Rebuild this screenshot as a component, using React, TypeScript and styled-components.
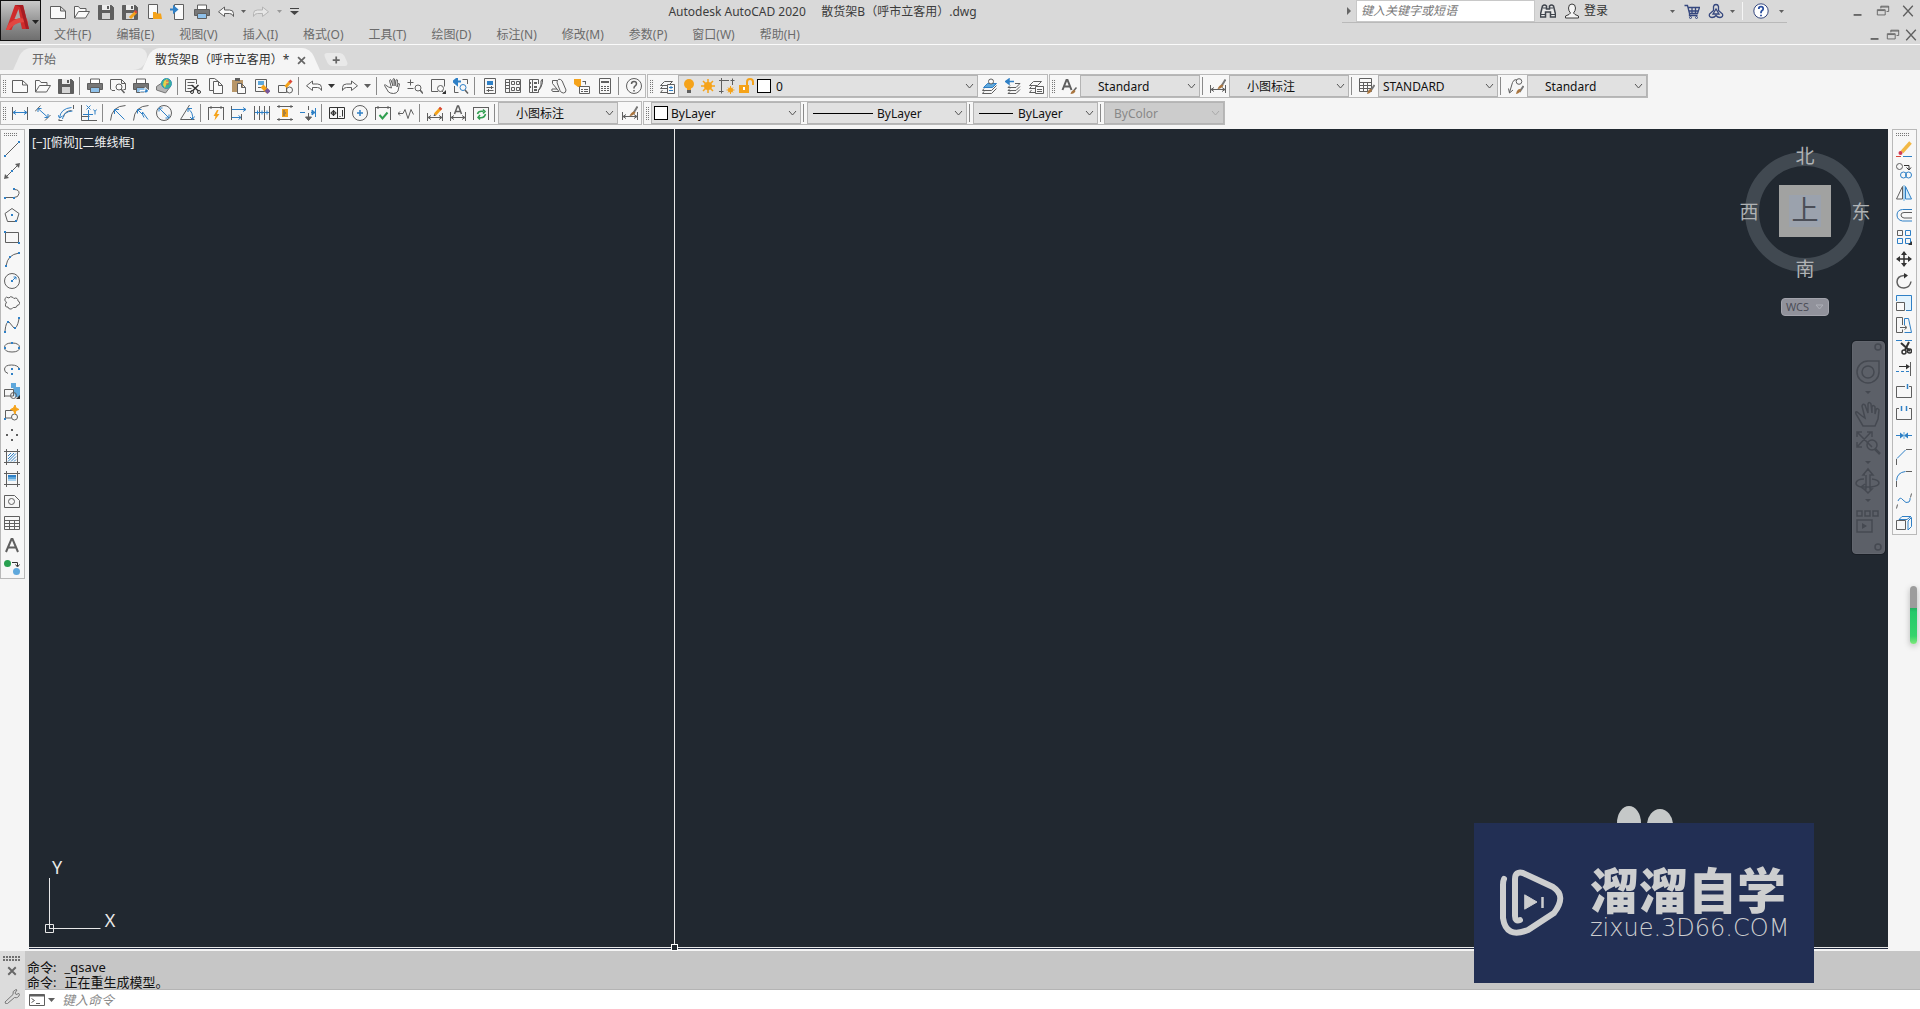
import React from "react";
import styled, { createGlobalStyle, css } from "styled-components";

const G = "#5f5f5f";
const B = "#2f80c6";
const O = "#f5a31a";
const L = "#5fa8dc";
const K = "#333333";
const N = "none";

type Shape = [d: string, stroke?: string, fill?: string, width?: number];

const circle = (x: number, y: number, r: number) =>
  `M${x - r} ${y}a${r} ${r} 0 1 0 ${2 * r} 0a${r} ${r} 0 1 0 ${-2 * r} 0z`;
const rect = (x: number, y: number, w: number, h: number) => `M${x} ${y}h${w}v${h}h${-w}z`;
const dots = (...p: [number, number][]): Shape => [
  p.map(([x, y]) => rect(x, y, 2, 2)).join(""),
  N,
  B,
];

const posts = "M.5 2v13M15.5 2v13";
const printer: Shape[] = [
  [rect(3.5, 1, 9, 4.5), G, "#fff"],
  ["M.5 5.5h15v6h-15z", G, "#777"],
  [rect(3.5, 9.5, 9, 5), G, "#8fc1ea"],
];
const disk: Shape[] = [
  ["M.5 1.5h13l2 2v12h-15z", G, "#5f5f5f"],
  [rect(4, 1, 8, 5), N, "#eee"],
  [rect(4, 9, 8, 6), N, "#d5d5d5"],
  [rect(9, 2, 2, 3), N, G],
];
const pencil: Shape[] = [
  ["M8 9.5L14 3", O, N, 3],
  ["M12.6 4.5L14.2 2.8", "#d9483b", N, 3],
  ["M6.5 11l1-2 1.5 1.4z", N, K],
];
const brush: Shape[] = [
  ["M15.5 1.5L11.5 8", "#777", N, 2],
  ["M12 6.5q-3 .5-4.5 4.5q4-.3 6-3.500z", N, "#a9753f"],
];
const stack: Shape[] = [
  ["M5.5 3.500h8l-4 4h-8zM3.500 8.500l-2 2h7M3.500 12l-2 2.500h7", G],
];
const undo: Shape[] = [["M6.500 3v3h5q4 0 4 3.500v3q-1-3-4-3h-5v3l-6-4.700z", G, "#fafafa"]];
const redo: Shape[] = [["M9.500 3v3h-5q-4 0-4 3.500v3q1-3 4-3h5v3l6-4.700z", G, "#fafafa"]];
const page: Shape[] = [["M.5 2.500h10l5 4.500v7.500h-15zM10.500 2.500v4.500h5", G, "#fafafa"]];
const folder: Shape[] = [
  ["M.5 14V2.500h4l1.500 2h6v3M.5 14l4-6.500h11l-4 6.500z", G, "#fafafa"],
];

const icons: Record<string, Shape[]> = {
  page,
  folder,
  disk,
  diskPen: [...disk, ["M8 14l6-6", O, N, 3], ["M13 8.500l1.500-1.500", "#d9483b", N, 3]],
  fromMobile: [
    ["M2.500.5h9v14h-9z", G, "#fafafa"],
    ["M7 15V8h3l1 1.500h4l1 5.500z", N, O],
  ],
  toMobile: [
    ["M4.500.5h9v15h-9z", G, "#fafafa"],
    ["M0 5.500h6M4 3l3 2.500-3 2.500z", B, B, 2],
  ],
  printer,
  undo,
  redo,
  redoDim: [["M9.500 3v3h-5q-4 0-4 3.500v3q1-3 4-3h5v3l6-4.700z", "#b4b4b4", "#e6e6e6"]],
  preview: [
    ["M5 12.500H2L.5 11V1.500h11l4 4v6h-2M11.500 1.500v4h4", G],
    [circle(9, 9, 3), G, "#fafafa"],
    ["M11 11l3.500 4", G, N, 1.500],
  ],
  plot: [...printer, ["M7 12.500h5v-3l4 3.500-4 3v-2H7z", "#fff", B]],
  globe: [
    ["M.5 8.500l6-4 8 4-5 6.500-9-3z", "#777", "#b5b5b5"],
    [circle(10.500, 5.500, 5), "#3390b5", "#36b59b"],
    ["M8 3l3-2 2 3-3 3-1 3-2-3z", N, "#e8cf4a"],
    ["M10 3h3M10 6h3", "#d3515a"],
  ],
  cut: [
    ["M7 13.500H.5v-12h11V6M2.500 4.500h7M2.500 7.500h6M2.500 10.500h4", G],
    ["M6.500 7l7 6M13.500 7l-6 6", K, N, 1.500],
    [circle(7, 14, 1.500) + circle(14, 14, 1.500), K],
  ],
  copyClip: [
    ["M5.500 12.500h-4v-12h5l4 3", G],
    ["M5.500 3.500h5l4 4v8h-9zM10.500 3.500v4h4", G, "#fafafa"],
  ],
  paste: [
    ["M1 2h11v12H1z", N, "#b89668"],
    [rect(4, 0, 5, 3), N, G],
    ["M6.500 5.500h4l4 4v6h-8zM10.500 5.500v4h4", G, "#fafafa"],
  ],
  matchProp: [
    ["M1.500 1.500h11v12h-11zM4 9.500h5", G],
    [rect(4, 3, 6, 4), N, L],
    ["M8 8l6 6", O, N, 4],
    ["M12 11.500l3 3", "#76569b", N, 4],
  ],
  blockEdit: [
    ["M1.500 14.500v-7h8v7zM8 2", G],
    [circle(12.500, 12, 3), G],
    ["M8.500 9L13 4", O, N, 3],
    ["M12.500 4.500L14.500 2.500", "#d9483b", N, 3],
  ],
  hand: [
    [
      "M4.500 9L1.500 7q-1-1-1 .5l4 6.500q2 1.500 5 1.500t4.500-2.500l1.500-7q-.5-1.500-1.500 0l-1 3 .5-7q-.5-1-1.500 0l-1 6-.5-7q-1-1-1.500 0v7l-2-6q-1-1-1.500.5l2 7.500z",
      G,
      "#fafafa",
    ],
  ],
  zoomPm: [
    ["M.5 4.500h6M3.500 1.500v6M.5 10.500h6", G],
    [circle(11, 10, 3), G],
    ["M13 12l3 3.500", G, N, 1.500],
  ],
  zoomWin: [
    ["M8 13.500H1.500v-12h13v7", G],
    [circle(10.500, 10.500, 3), G, "#fafafa"],
    ["M12 13l2 2", G],
    ["M16 12v4h-4z", N, K],
  ],
  zoomPrev: [
    ["M1.500 8v6.500h4M14.500 6V1.500h-5", G],
    ["M1 3.500h7M4 .5L.5 3.500l3.500 3z", B, B, 2],
    [circle(10, 9.500, 3), B],
    ["M12 12l3 3.500", G, N, 1.500],
  ],
  props: [
    [rect(2.500, 0.5, 11, 15), G],
    [rect(5, 3, 6, 4), N, B],
    ["M4.500 9.500h7M4.500 12.500h7M9.500 8v3M6.500 11v3", G],
  ],
  design: [
    [rect(0.5, 1.5, 15, 13), G],
    ["M4.500 1.500v13M1 4.500h3M1 7.500h3M1 10.500h3", G],
    [rect(6.500, 3.500, 3, 3) + rect(11.500, 3.500, 3, 3) + rect(6.500, 9.500, 3, 3) + rect(11.500, 9.500, 3, 3), G],
  ],
  palette: [
    ["M10.500 6V1.500h-9v13h9v-3M4.500 1.500v13", G],
    [rect(6, 4, 3, 2) + rect(6, 8, 3, 2) + rect(6, 11, 3, 2) + rect(2, 4, 1, 2) + rect(2, 8, 1, 2), N, G],
    ["M11 12l2-5V3l1.500-2v3.500L13 9z", G, "#ddd"],
  ],
  sheet: [["M1.500 5.500v-3h5M1.500 5.500L8 13.500H2q-2-.5-1-2.500h5M6.500 2.500q1-2 3-1t2.500 3.500l3 7q0 3-2.500 3T9 12.500L6.500 6q-1-2 0-3.500z", G]],
  markup: [
    ["M0 1h7v8H4L0 6z", N, O],
    ["M8.500 3.500h3v3M11.500 6v-3", G],
    [rect(5.500, 8.500, 10, 7), G, "#fafafa"],
    ["M7 11.500h2M10 11.500h4M7 13.500h2M10 13.500h4", G],
  ],
  calc: [
    [rect(2.500, 0.5, 11, 15), G],
    ["M4 4h8", G, N, 2],
    ["M4 8.500h8M4 10.500h8M4 12.500h8", G, N, 1],
    ["M6.500 7v7M9.500 7v7", "#fafafa"],
  ],
  help: [
    [circle(8, 8, 7.500), G],
    ["M5.500 6q0-2.500 2.500-2.500t2.500 2.200q0 1.300-1.300 2.100T8 10v.5M8 12v1.500", G, N, 1.500],
  ],
  layerProps: [...stack, [rect(8.500, 6.500, 7, 9), G, "#fafafa"], ["M10 9.500h4M12 8v3M10 12.500h4", B]],
  layerMake: [
    ["M5.500 5.500h9l-4 4h-9z", B, L],
    [circle(9, 3.500, 2.500), G, "#fafafa"],
    ["M2 10.500L.5 12.500h9l5-5M2 13.500L.5 15.500h9l5-5", G],
  ],
  layerPrev: [
    ["M10 5.500h5l-4 4H3l2-2M5 10.500l-2 2h8l4-4M5 13.500l-2 2h8l4-4", G],
    ["M2 3.500h7M4 1L.5 3.500 4 6z", B, B, 1.500],
  ],
  layerState: [...stack, [rect(7.500, 8.500, 8, 7), G, "#fafafa"], ["M9 11.500h5M9 13.500h5", G]],
  bulb: [
    [circle(8, 6, 5), N, O],
    [rect(6, 10, 4, 2), N, O],
    [rect(6, 12, 4, 3), N, G],
  ],
  sun: [
    [circle(8, 8, 4), N, O],
    ["M8 1v14M1 8h14M3 3l10 10M13 3L3 13", O, N, 1.500],
  ],
  vpFreeze: [
    ["M2.500 12v-8M4 2.500h6M13.500 4v3M0 2.500h4.500M2.500 0v4.500M11.500 2.500h4M13.500.5v4M0 13.500h4.500M2.500 11.500v4", G],
    [circle(11.500, 12, 2.500), N, O],
    ["M11.500 8v8M7.500 12h8M9 9.500l5 5M14 9.500l-5 5", O],
  ],
  lock: [
    [rect(1, 7, 10, 8), N, O],
    ["M9 7V4q0-3 3-3t3 3v3", O, N, 2],
    [rect(5, 9, 2, 3), N, "#fff"],
  ],
  textStyle: [["M1.500 12L5.500 2h1L10.500 12M3 8.500h6", G, N, 2], ["M15.500 9.500L12.500 13", G, N, 1.500], ["M13.500 12q-3 0-4 4 4 0 5-3z", N, "#a9753f"]],
  dimStyle: [["M.5 7v8M15.500 7v8M1 11.500h14M4 9.500l-3 2 3 2M12 9.500l3 2-3 2", G], ...brush],
  tableStyle: [
    [rect(0.5, 0.5, 12, 13), G, "#fafafa"],
    ["M.5 4.500h12M.5 7.500h12M.5 10.500h12M4.500 4v9M8.500 4v9", G],
    ["M15.500 7l-4 6", "#777", N, 2],
    ["M12 11q-3 0-4 5 4-1 5-4z", N, "#a9753f"],
  ],
  leaderStyle: [
    ["M1.500 14.500l3-10q1-3 4-3M.5 10.500l1 4.500 3.500-3", G],
    [circle(11, 3.500, 2.800), G],
    ["M15.500 8l-4 6", "#777", N, 2],
    ["M12 11q-3 0-4 5 4-1 5-4z", N, "#a9753f"],
  ],
  dimLinear: [[posts, G], ["M1 7.500h14M4 5.500l-3 2 3 2M12 5.500l3 2-3 2", B]],
  dimAligned: [["M0 6.500L5.500.5M10 15.500L15.500 10", G], ["M3 3.500l10 9M3 7V3.500h3.500M13 9v3.500H9.500", B]],
  dimArc: [
    ["M1 15V14M.5 15.500h4M15.500 0v4M5.500 12q1-6 8-6.500", G],
    ["M1.500 13Q2.500 3.500 13.500 2.500M4.500 14q1-7.500 10-8M0 10l1.500 3 3-2", B],
  ],
  dimOrd: [
    ["M.5 0v15.500H16M.5 11.500h8", G],
    ["M2 9.500h10M7.500 5v10M5.500.5l4 4M9.500.5l-4 4M12.500 4.500l1.500 2 1.500-2M14 6.500v3", B],
  ],
  dimRadius: [["M15.500.5Q1.500 1 .5 15.500", G, N], ["M4.500 4.500l10 10M4.500 9V4.500H9", B]],
  dimJog: [["M15.500.5Q1.500 1 .5 15.500", G], ["M4.500 4.500l5 5V7l5.500 7.500M4.500 8.500v-4h4M9.500 9.500l1.500 3", B]],
  dimDia: [[circle(8, 8, 7.500), G], ["M3 3l10 10M3 6.500V3h3.500M13 9.500V13H9.500", B]],
  dimAngle: [["M10.500 0L1.500 14.500h14", G], ["M9 3.500q5.500 4 4.500 11M9 7V3.500h4M11 12l2.500 2.500 2-3", B]],
  dimQuick: [[posts + "M1 2.500h14M3 1v3M13 1v3", G], ["M9 5L5.500 11h2L6.500 15.500 11.500 9H9l1.500-4z", N, O]],
  dimBase: [["M.5 1v14M10.500 9v6", G], ["M1 4.500h14M12 2.500l3 2-3 2M1 12.500h9M7.500 10.500l2.500 2-2.500 2M13.500 4v1", B]],
  dimCont: [["M.5 1v14M15.500 1v14M5.500 1v14M10.500 1v14", G], ["M1 7.500h14M3.500 5.500v4M8 5.500v4M13 5.500v4", B]],
  dimSpace: [["M0 1.500h16M0 14.500h16M2 0v3M14 0v3M2 13v3M14 13v3", G], [rect(5, 4, 6, 8), N, O], ["M6 6h2M6 8h3M6 10h2", G]],
  dimBreak: [["M0 7.500h5M11 7.500h5M15.500 3v9", B], ["M8.500 1v4M8.500 8v7M5.500 12l3 3.500 3-3.500z", G, G], ["M12 5l3 2.500-3 2.500z", B, B]],
  tolerance: [
    [rect(0.5, 2.5, 15, 11), K],
    ["M8.500 3v10M1.500 8h6M4.500 5v6M11 11v1M13.500 5v6.500", K, N, 1],
    [circle(4.500, 8, 2), K],
  ],
  center: [[circle(8, 8, 7.500), G], ["M5 8h6M8 5v6", B, N, 1.500]],
  inspect: [[posts + "M1 2.500h14M3 1v3M13 1v3", G], ["M4.500 10l3 3.500 5-6", "#2f9e4f", N, 2]],
  jog: [["M0 8.500h5l2-4 3 9 3-9 2.500 5M2 6.500l-2 2 2 2", G]],
  dimEdit: [["M.5 8v8M15.500 8v8M1 12.500h14M4 10.500l-3 2 3 2M12 10.500l3 2-3 2", G], ...pencil],
  dimText: [["M.5 7v9M15.500 7v9M1 12.500h14M4 10.500l-3 2 3 2M12 10.500l3 2-3 2", G], ["M4.500 9L7.500 1h1l3 8M5.500 6.500h5", G, N, 1.500]],
  dimUpdate: [[posts + "M1 2.500h14", G], ["M4.500 9q1-3.500 6-2.500M12.500 9q-1 4.500-6.500 3.500M10 4.500l2 2-2 2M7 10l-2 2.500 2 2", "#2f9e4f", N, 1.500]],
  line: [["M1 15L15 1", G], dots([0, 14], [14, 0])],
  xline: [["M1 15L15 1", G], ["M0 16l1-5 4 4zM16 0l-1 5-4-4z", N, G], dots([7, 7])],
  pline: [["M2 12.500h8M10 4.500q5.500 0 5 4t-5 4", G], dots([0, 12], [9, 12], [9, 3])],
  polygon: [["M8 1.500l7 5-2.500 8h-9L1 6.500z", G], dots([7, 7], [11, 13])],
  rectangle: [[rect(1.5, 3.5, 13, 10), G], dots([0, 2], [14, 13])],
  arc: [["M2 15q1-6 4-9t9-4", G], dots([1, 14], [5, 5], [14, 1])],
  circle: [[circle(8, 8, 7.5), G], ["M8 8l4-4M9.500 4H12v2.500", B], dots([7, 7])],
  cloud: [
    ["M2.500 7Q0 6 1 3.500T5 3q1-2 3-1t2 1.500q2-1 3 0t1 2.500q2 .5 1.500 2.500T13 10.500q0 2-2 2t-2 0q-1 2-3 1.500T4 12q-2 .5-2.500-1T2.500 7z", G],
  ],
  spline: [["M1 14q1-10 4-9l5 6q3 1 5-9", G], dots([0, 14], [3, 4], [10, 10], [14, 0])],
  ellipse: [["M.5 8.500q0-4.500 7.500-4.500t7.500 4.500-7.500 4.500-7.500-4.500z", G], dots([0, 8], [14, 8], [7, 3])],
  ellArc: [["M4 12.500q-4-1.500-3.500-4.500.5-4 7-4t8 4", G], dots([14, 7], [7, 7], [7, 12])],
  insert: [[rect(7, 0, 5, 5) + "M9 4h7v10h-5z", N, L], ["M.5 14V6.500h9V13h-9M9 13", G], [circle(9.5, 12.5, 3), G], ["M16 12v4h-4z", N, K]],
  block: [["M1.500 13V5.500h8M1.500 13h6", G], [circle(10.5, 12, 3), G], dots([0, 13]), ["M11 0l1 3 3 1.500-3 1-1 3.500-1.500-3.500-3-1 3-1.500z", O, O]],
  point: [[rect(7, 2, 2, 2) + rect(2, 7, 2, 2) + rect(12, 7, 2, 2) + rect(7, 12, 2, 2), N, G]],
  hatch: [["M2.500 0v16M13.500 0v16M0 2.500h16M0 13.500h16", G], ["M4 7l3-3M4 10l6-6M4 12.500L12 4.500M7 12.500l5-5M10 12.500l2-2", B]],
  gradient: [["M2.500 0v16M13.500 0v16M0 2.500h16M0 13.500h16", G], [rect(4, 4, 8, 2), N, B], [rect(4, 6, 8, 2), N, L], [rect(4, 8, 8, 2), N, "#a9d2ef"]],
  region: [["M.5 14.500v-12h10l5 5v7z", G], [circle(7.5, 8.5, 3), G]],
  table: [[rect(0.5, 1.5, 15, 13), G], ["M1 5.500h14M1 8.500h14M1 11.500h14M5.500 5v9M10.500 5v9", G]],
  mtext: [["M2 15L7.500 2h1L14 15M4 10.500h8", G, N, 2]],
  addSel: [[circle(3.5, 4.500, 3.500), N, "#28a050"], [circle(12.500, 12.500, 3.500), N, L], ["M8 3.500h5.500V7M11.500 5.500l2 2.500 2-2.500", K]],
  erase: [["M0 15.500h5", "#d9483b"], ["M7 15.500h9", B], ["M6 11L14.500 1.500", "#f2b845", N, 3.500], [circle(4.500, 12, 2), N, "#d23b55"]],
  copy: [[circle(3.500, 3.500, 3), G], [circle(7.500, 12, 3) + circle(12.500, 12, 3), B], ["M8 2.500h5v4M10.500 4.500L13 7l2-2.500", K]],
  mirror: [["M6.500 1.500v12.500h-6z", G], ["M9.500 1.500v12.500h6z", B, "#d4ecfb"], ["M8 0v16", L]],
  offset: [["M16 2.500H6.500q-5.500.5-5.500 5.500t5.500 6H16", B], ["M16 5.500H8q-3 0-3 2.500t3 3h8", G]],
  array: [[rect(1.5, 1.5, 5, 5), G], [rect(9.500, 1.500, 5, 5) + rect(1.500, 9.500, 5, 5) + rect(9.500, 9.500, 5, 5), B], ["M16 12v4h-4z", N, K]],
  move: [["M8 1v14M1 8h14", K, N, 1.500], ["M8 0l3 4H5zM8 16l3-4H5zM0 8l4-3v6zM16 8l-4-3v6z", N, K]],
  rotate: [["M10.500 2.500H8q-7 .5-7 6.500.5 6 7 6 6-.5 7-6.500", G, N, 1.500], ["M8 0l4 2.500-4 3z", N, K]],
  scale: [["M.5 6V.5h15v15H10", B, "#e3f3fd"], [rect(0.5, 7.500, 8, 8), G, "#fafafa"]],
  stretch: [["M6.500 8V.5h-6v15h6v-3M4 10.500h6M8.500 8.500l2.500 2-2.500 2", G], ["M8.500 8V1.500h4l3 14h-7", B]],
  trim: [["M0 1.500h6M9 1.500h7", B], ["M5 4l9 8M13 3l-4 8", K, N, 2], [circle(8, 13, 2) + circle(13.500, 12, 2), K, N, 1.500]],
  extend: [["M14.500 1v14", G], ["M3 5.500h9", K], ["M10 3l4 2.500-4 3z", N, K], ["M0 10.500h3M5 10.500h3M10 10.500h3", B]],
  breakPt: [["M9 3.500H.5v11h15v-11H13", G], ["M11.500 1v5", B, N, 1.500]],
  breakSeg: [["M3 3.500H.5v11h15v-11H13", G], ["M5.500 1v5M10.500 1v5", B, N, 1.500]],
  join: [["M0 8.500h4M12 8.500h4", B], ["M4 5.500l4 3-4 3zM12 5.500l-4 3 4 3z", N, B], ["M8 5v7", L]],
  chamfer: [["M.5 16v-6M10 .5h6", G], ["M1 9.500L9.500 1", B]],
  fillet: [["M.5 16v-6M10 .5h6", G], ["M.5 9.500Q1 1.500 9.500.5", B]],
  blend: [["M.5 15.500l1-4M14.500 4.500l1-4", G], ["M2 8q2-5 5-1t6 2q1.500-2 1-4", B]],
  explode: [[rect(0.5, 5.500, 9, 9), G], ["M3 4.500l3-3h9l-4 3zM12 6l3.500-3.500v9L12 15z", B]],
  binoculars: [
    ["M2.500 3q2-2 4 0v3h3V3q2-2 4 0l2 8v3h-5V9h-5v5h-5v-3z", "#3f444c", "#e8e8e8", 1.500],
    ["M1 11.500h5M10 11.500h5M3 5h3M10 5h3", "#3f444c"],
  ],
  user: [["M8 1q-3.500 0-3.500 4 0 3 2 5-.500 1.500-5 3v2h13v-2q-4.500-1.500-5-3 2-2 2-5 0-4-3.500-4z", "#3c3c3c", "#f5f5f5"]],
  cart: [["M.5 2.500h3l2 8h8l2-6H4M5 8h9.500M8 5v5M11.500 5v5M5.500 10.500v2h8", "#35477e", N, 1.300], [circle(6.500, 14.500, 1) + circle(12.500, 14.500, 1), "#35477e"]],
  a360: [["M8 1.500q2 0 2.500 2v4l4 3.500q1 3-2.500 3.500-2.500 0-4-2-1.500 2-4 2Q.5 14 1.500 11l4-3.500v-4q.5-2 2.500-2zM8 6l-3 5h6z", "#35477e", N, 1.300]],
  helpBlue: [
    [circle(8, 8, 7.200), "#35477e", "#fff"],
    ["M5.800 6q0-2.300 2.200-2.300t2.200 2q0 1.200-1.100 1.900T8 9.800v.5M8 11.800v1.500", "#2a4fa0", N, 1.800],
  ],
  minimize: [["M3 12.500h9", G, N, 2]],
  restore: [["M5.500 5V2.500h9v6H12M5.500 3.500h9", G], [rect(1.500, 6.500, 9, 6), G], ["M2 7.500h8", G]],
  close: [["M2.500 2l11 12M13.500 2l-11 12", G, N, 1.500]],
  closeSm: [["M3 3l10 10M13 3L3 13", "#666", N, 2.500]],
  plus: [["M4 8h8M8 4v8", "#666", N, 2]],
  wrench: [["M1 14L9 6.500Q8 3 12 1.500l1 .5-2 3 1 1.500 3-1 .5 1q-1 4-5 3L3.500 15.500Q1.500 17 1 14z", "#777"]],
  prompt: [[rect(0.5, 2.5, 15, 11), G, "#fff"], ["M.5 3.500h15", G, N, 2], ["M2.500 6.500l3 2-3 2M7 11.500h4", G]],
};

const Svg = styled.svg`
  display: block;
  flex: none;
`;

const Icon = ({ name, size = 16 }: { name: string; size?: number }) => (
  <Svg width={size} height={size} viewBox="0 0 16 16" fill="none" aria-hidden="true">
    {icons[name].map(([d, stroke = N, fill = N, w = 1], i) => (
      <path key={i} d={d} stroke={stroke} fill={fill} strokeWidth={w} />
    ))}
  </Svg>
);

const Global = createGlobalStyle`
  * { box-sizing: border-box; }
  body {
    margin: 0;
    background: #f5f5f5;
    font: 12px/16px "Noto Sans", "Noto Sans CJK SC", sans-serif;
    color: #1e1e1e;
    overflow: hidden;
  }
  button, input, select { font: inherit; color: inherit; margin: 0; padding: 0; border: 0; background: none; border-radius: 0; }
  button { display: flex; align-items: center; justify-content: center; }
`;

const Page = styled.div`
  display: flex;
  flex-direction: column;
  height: 100vh;
  position: relative;
`;

const Header = styled.header`
  display: flex;
  height: 45px;
  background: #d9d9d9;
  border-bottom: 1px solid #fafafa;
`;

const AppButton = styled.button`
  width: 41px;
  height: 41px;
  border: 1px solid #111;
  background: linear-gradient(#c9c9c9, #8d8d8d 60%, #6f6f6f);
`;

const HeaderRows = styled.div`
  flex: 1;
  min-width: 0;
`;

const TitleRow = styled.div`
  display: flex;
  height: 23px;
`;

const QuickAccess = styled.div`
  display: flex;
  align-items: center;
  padding-left: 5px;
  width: 262px;
`;

const QatButton = styled.button<{ $w?: number }>`
  width: ${(p) => p.$w ?? 24}px;
  height: 22px;
`;

const Title = styled.h1`
  flex: 1;
  margin: 0;
  padding-top: 4px;
  font-size: 12px;
  font-weight: 400;
  text-align: center;
  color: #3c3c3c;
  white-space: pre;
`;

const InfoCenter = styled.div`
  display: flex;
  align-items: center;
  width: 445px;
  margin-right: 58px;
  border-bottom: 1px solid #b9b9b9;
`;

const SearchBox = styled.input`
  width: 179px;
  height: 22px;
  padding: 0 0 2px 4px;
  margin-right: 1px;
  background: #fff;
  border: 1px solid #c8c8c8;
  font-style: italic;
  &::placeholder { color: #777; opacity: 1; }
`;

const InfoButton = styled.button<{ $w?: number }>`
  width: ${(p) => p.$w ?? 24}px;
  height: 22px;
  justify-content: center;
  color: #333;
`;

const Spacer = styled.span`
  flex: 1;
`;

const Divider = styled.span`
  width: 1px;
  height: 18px;
  background: #f5f5f5;
  margin: 0 4px;
`;

const WindowButtons = styled.div<{ $w: number }>`
  display: flex;
  button { width: ${(p) => p.$w}px; height: 22px; }
`;

const MenuRow = styled.div`
  display: flex;
  justify-content: space-between;
  align-items: center;
  height: 21px;
  padding-top: 2px;
`;

const Menu = styled.nav`
  display: flex;
  gap: 25px;
  padding-left: 13px;
  button { color: #6b6b6b; white-space: nowrap; }
`;

const TabStrip = styled.div`
  display: flex;
  height: 25px;
  padding: 3px 0 0 18px;
  background: #d9d9d9;
`;

const Tab = styled.div<{ $active?: boolean; $w: number }>`
  position: relative;
  z-index: ${(p) => (p.$active ? 1 : 0)};
  display: flex;
  align-items: center;
  justify-content: space-between;
  width: ${(p) => p.$w}px;
  height: 22px;
  padding: ${(p) => (p.$active ? "2px 8px 0" : "2px 14px 0")};
  color: ${(p) => (p.$active ? "#333" : "#666")};
  isolation: isolate;
  &::before, &::after {
    content: "";
    position: absolute;
    z-index: -1;
    inset: 0 40% 0 0;
    background: ${(p) => (p.$active ? "#f5f5f5" : "#ebebeb")};
    border-radius: 8px 0 0 0;
    transform: skewX(-24deg);
  }
  &::after {
    inset: 0 0 0 40%;
    border-radius: 0 8px ${(p) => (p.$active ? 0 : 14)}px 0;
    transform: skewX(${(p) => (p.$active ? 24 : 0)}deg);
  }
`;

const NewTab = styled.button`
  width: 20px;
  height: 13px;
  margin: 5px 0 0 11px;
  background: #e9e9e9;
  border-radius: 4px;
  transform: skewX(24deg);
  svg { transform: skewX(-24deg); }
`;

const Toolbars = styled.div`
  display: flex;
  flex-direction: column;
  gap: 3px;
  padding: 4px 0;
`;

const ToolRow = styled.div`
  display: flex;
  gap: 1px;
`;

const bar = css`
  display: flex;
  border: 1px solid #b9b9b9;
  background: #f7f7f7;
`;

const Toolbar = styled.div`
  ${bar}
  align-items: center;
  height: 24px;
`;

const Grip = styled.span<{ $flat?: boolean }>`
  flex: none;
  width: ${(p) => (p.$flat ? 14 : 4)}px;
  height: ${(p) => (p.$flat ? 4 : 15)}px;
  margin: ${(p) => (p.$flat ? "2px 0 2px 3px" : "0 1px 0 2px")};
  background:
    linear-gradient(#f5f5f5 1px, transparent 1px) 0 0 / 2px 2px,
    linear-gradient(90deg, #777 1px, #f5f5f5 1px) 0 0 / 2px 2px;
`;

const CommandGrip = styled.span`
  width: 18px;
  height: 6px;
  background:
    linear-gradient(transparent 2px, #dcdcdc 2px) 0 0 / 3px 3px,
    linear-gradient(90deg, #707070 2px, #dcdcdc 2px) 0 0 / 3px 3px;
`;

const Tool = styled.button`
  flex: none;
  width: 23px;
  height: 22px;
`;

const Sep = styled.span`
  flex: none;
  width: 1px;
  height: 18px;
  margin: 0 3px 0 2px;
  background: #8a8a8a;
`;

const ComboBox = styled.label<{ $w: number; $pad: number; $off?: boolean }>`
  position: relative;
  display: flex;
  align-items: center;
  width: ${(p) => p.$w}px;
  height: 22px;
  background: ${(p) => (p.$off ? "#cccccc" : "#e1e1e1")};
  border: 1px solid #b4b4b4;
  color: ${(p) => (p.$off ? "#888" : "#111")};
  select {
    appearance: none;
    width: 100%;
    height: 20px;
    padding: 2px 0 0 ${(p) => p.$pad}px;
    opacity: 1;
    outline: none;
  }
`;

const Lead = styled.span`
  position: absolute;
  left: 2px;
  display: flex;
  align-items: center;
  gap: 3px;
  pointer-events: none;
`;

const Swatch = styled.span`
  width: 14px;
  height: 14px;
  background: #fff;
  border: 1px solid #000;
`;

const LineSample = styled.span<{ $w: number }>`
  width: ${(p) => p.$w}px;
  height: 1px;
  margin-left: 3px;
  background: #000;
`;

const Chevron = styled.svg`
  position: absolute;
  right: 3px;
  pointer-events: none;
`;

const Combo = (p: { w: number; pad: number; text: string; label: string; off?: boolean; children?: React.ReactNode }) => (
  <ComboBox $w={p.w} $pad={p.pad} $off={p.off}>
    {p.children && <Lead>{p.children}</Lead>}
    <select aria-label={p.label} disabled={p.off}>
      <option>{p.text}</option>
    </select>
    <Chevron width="9" height="6" viewBox="0 0 9 6" fill="none">
      <path d="M1 1l3.500 4L8 1" stroke={p.off ? "#aaa" : "#555"} />
    </Chevron>
  </ComboBox>
);

const Caret = ({ color = G, small }: { color?: string; small?: boolean }) => (
  <Svg width={small ? 5 : 7} height={small ? 3 : 4} viewBox="0 0 7 4">
    <path d="M0 0h7L3.500 4z" fill={color} />
  </Svg>
);

const Tools = ({ items }: { items: string }) => (
  <>
    {items.split(" ").map((n, i) =>
      n === "|" ? (
        <Sep key={i} />
      ) : (
        <Tool key={i} aria-label={n}>
          <Icon name={n} />
        </Tool>
      )
    )}
  </>
);

const CaretTool = styled.button`
  width: 13px;
  height: 22px;
`;

const Work = styled.main`
  display: flex;
  align-items: flex-start;
  gap: 4px;
  flex: 1;
  min-height: 0;
  padding-right: 3px;
`;

const SideBar = styled.div`
  ${bar}
  flex-direction: column;
  width: 25px;
  button { width: 22px; height: 22px; }
`;

const Canvas = styled.section`
  position: relative;
  align-self: stretch;
  flex: 1;
  background: #212830;
  border-bottom: 1px solid #212b40;
`;

const ViewLabel = styled.div`
  position: absolute;
  left: 3px;
  top: 6px;
  color: #f0f0f0;
`;

const CrossV = styled.i`
  position: absolute;
  left: 645px;
  top: 0;
  bottom: 4px;
  width: 1px;
  background: #e8e8e8;
`;

const CrossH = styled.i`
  position: absolute;
  left: 0;
  right: 0;
  bottom: 0;
  height: 1px;
  background: #e8e8e8;
`;

const PickBox = styled.i`
  position: absolute;
  left: 642px;
  bottom: -3px;
  width: 7px;
  height: 7px;
  background: #212830;
  border: 1px solid #fff;
`;

const Ucs = styled.svg`
  position: absolute;
  left: 14px;
  bottom: 3px;
  overflow: visible;
  font: 18px "Noto Sans", sans-serif;
`;

const ViewCube = styled.svg`
  position: absolute;
  right: 18px;
  top: 4px;
  overflow: visible;
  font: 19px "Noto Sans CJK SC", sans-serif;
`;

const Wcs = styled.button`
  position: absolute;
  right: 59px;
  top: 169px;
  width: 48px;
  height: 18px;
  gap: 6px;
  background: #91929b;
  border: 1px solid #a3a4ac;
  border-radius: 4px;
  color: #4c4e58;
  font-size: 11px;
`;

const NavBar = styled.div`
  position: absolute;
  right: 3px;
  top: 212px;
  width: 33px;
  height: 213px;
  background: #5c6068;
  border: 1px solid #62666e;
  border-radius: 4px;
  box-shadow: 0 0 0 1px #1a1f26;
`;

const Battery = styled.div`
  position: absolute;
  right: 3px;
  top: 586px;
  width: 7px;
  height: 58px;
  border-radius: 4px;
  background: linear-gradient(#9c9c9c 22px, #22b060 22px, #25c96a 26px, #35d46c 50px, #7ee87a);
  box-shadow: 0 2px 6px #00000040;
`;

const Command = styled.footer`
  display: grid;
  grid-template-columns: 25px 1fr;
  height: 58px;
  margin-top: 2px;
  background: #c6c6c6;
`;

const CommandSide = styled.div`
  display: flex;
  flex-direction: column;
  align-items: center;
  background: #dcdcdc;
  padding: 5px 2px 0 0;
  gap: 3px;
  button:last-child { margin-top: 8px; }
`;

const CommandMain = styled.div`
  display: flex;
  flex-direction: column;
`;

const History = styled.div`
  height: 39px;
  padding: 9px 0 0 2px;
  font-size: 13px;
  line-height: 15px;
  color: #111;
  border-bottom: 1px solid #b4b4b4;
  div { display: flex; gap: 8px; }
`;

const Prompt = styled.label`
  flex: 1;
  display: flex;
  align-items: center;
  gap: 3px;
  padding-left: 4px;
  background: #fff;
  input {
    flex: 1;
    height: 16px;
    padding-left: 4px;
    font-size: 13px;
    font-style: italic;
    outline: none;
  }
  input::placeholder { color: #8a8a8a; opacity: 1; }
`;

const Watermark = styled.div`
  position: absolute;
  right: 106px;
  bottom: 26px;
  display: flex;
  align-items: center;
  width: 340px;
  height: 160px;
  padding-left: 26px;
  gap: 24px;
  background: #222f54;
  color: #cdcecf;
  white-space: nowrap;
`;

const Ears = styled.svg`
  position: absolute;
  left: 142px;
  top: -17px;
`;

const Brand = styled.div`
  font-size: 49px;
  line-height: 50px;
  font-weight: 900;
`;

const BrandUrl = styled.div`
  font: 200 24px/26px "DejaVu Sans", sans-serif;
`;

const Nav = () => (
  <NavBar>
    <svg width="31" height="211" fill="none" stroke="#454951" strokeWidth="1.500">
      <circle cx="25" cy="5" r="3" />
      <circle cx="25" cy="205" r="3" />
      <circle cx="15" cy="30" r="6" />
      <path d="M15 19h11v11a11 11 0 1 1-11-11z" />
      <path d="M9 74l-5-4q-2-1-1 2l7 12h12l3-7 1-9q-2-3-3 0l-1 4V65q-2-3-3 0v6l-1-9q-2-3-3 0v9l-3-8q-2-2-3 1l3 12z" />
      <path d="M4 90l15 15M4 105L18 90M4 95v-5h5M14 90h5v5M4 100v5h5" />
      <circle cx="19" cy="103" r="5" />
      <path d="M22 107l5 5" strokeWidth="2.500" />
      <path d="M12 133h-2l5-6 5 6h-3v14h2l-4 4-4-4h2v-14M8 145q-5-1-5-4 1-4 8-4M19 137q7 1 7 4t-8 4h-9M12 142l-4 3 4 3" />
      <path d="M4 169h5v5H4zM12 169h5v5h-5zM20 169h5v5h-5zM4 178h15v12H4z" />
      <path d="M9 181l5 3-5 3zM12 49h6l-3 3zM12 119h6l-3 3zM12 157h6l-3 3z" fill="#454951" stroke="none" />
    </svg>
  </NavBar>
);

const menus = ["文件(F)", "编辑(E)", "视图(V)", "插入(I)", "格式(O)", "工具(T)", "绘图(D)", "标注(N)", "修改(M)", "参数(P)", "窗口(W)", "帮助(H)"];

const WinControls = ({ w }: { w: number }) => (
  <WindowButtons $w={w}>
    <button aria-label="最小化"><Icon name="minimize" size={14} /></button>
    <button aria-label="还原"><Icon name="restore" size={14} /></button>
    <button aria-label="关闭"><Icon name="close" size={14} /></button>
  </WindowButtons>
);

export default function App() {
  return (
    <Page>
      <Global />
      <Header>
        <AppButton aria-label="AutoCAD">
          <svg width="38" height="38" fill="none">
            <path d="M4 28L13 3h8l6 24h-7l-1.500-7-6 .5-3 7.500z" fill="#cf2b2b" />
            <path d="M16.500 7l-4 10h6z" fill="#a9a9a9" />
            <path d="M4 28q2-9 13-12l8 1 1 4q-11-3-19 7z" fill="#e24640" />
            <path d="M13 3l5 2 6 22h3L21 3z" fill="#a61d23" />
            <path d="M30 18h7l-3.500 4z" fill="#222" />
          </svg>
        </AppButton>
        <HeaderRows>
          <TitleRow>
            <QuickAccess>
              {["page", "folder", "disk", "diskPen", "fromMobile", "toMobile", "printer", "undo"].map((n) => (
                <QatButton key={n} aria-label={n}><Icon name={n} /></QatButton>
              ))}
              <QatButton $w={10} aria-label="放弃列表"><Caret small /></QatButton>
              <QatButton $w={25} aria-label="重做"><Icon name="redoDim" /></QatButton>
              <QatButton $w={12} aria-label="重做列表"><Caret small color="#999" /></QatButton>
              <QatButton $w={18} aria-label="自定义">
                <svg width="9" height="7"><path d="M0 0h9v1H0zM0 3h9L4.500 7z" fill="#444" /></svg>
              </QatButton>
            </QuickAccess>
            <Title>{"Autodesk AutoCAD 2020     散货架B（呼市立客用）.dwg"}</Title>
            <InfoCenter>
              <InfoButton $w={14} aria-label="展开">
                <svg width="4" height="8"><path d="M0 0l4 4-4 4z" fill="#666" /></svg>
              </InfoButton>
              <SearchBox placeholder="键入关键字或短语" aria-label="搜索" />
              <InfoButton aria-label="搜索"><Icon name="binoculars" /></InfoButton>
              <InfoButton aria-label="用户"><Icon name="user" /></InfoButton>
              <InfoButton>登录</InfoButton>
              <Spacer />
              <InfoButton $w={12} aria-label="账户列表"><Caret small /></InfoButton>
              <InfoButton $w={28} aria-label="商店"><Icon name="cart" /></InfoButton>
              <InfoButton $w={20} aria-label="A360"><Icon name="a360" /></InfoButton>
              <InfoButton $w={12} aria-label="A360 列表"><Caret small /></InfoButton>
              <Divider />
              <InfoButton $w={28} aria-label="帮助"><Icon name="helpBlue" /></InfoButton>
              <InfoButton $w={12} aria-label="帮助列表"><Caret small /></InfoButton>
            </InfoCenter>
            <WinControls w={25} />
          </TitleRow>
          <MenuRow>
            <Menu>{menus.map((m) => <button key={m}>{m}</button>)}</Menu>
            <WinControls w={18} />
          </MenuRow>
        </HeaderRows>
      </Header>

      <TabStrip>
        <Tab $w={129}>开始</Tab>
        <Tab $w={168} $active>
          <span>散货架B（呼市立客用）*</span>
          <button aria-label="关闭标签"><Icon name="closeSm" size={11} /></button>
        </Tab>
        <NewTab aria-label="新建标签"><Icon name="plus" size={14} /></NewTab>
      </TabStrip>

      <Toolbars>
        <ToolRow>
          <Toolbar>
            <Grip />
            <Tools items="page folder disk | printer preview plot globe | cut copyClip paste matchProp blockEdit | undo" />
            <CaretTool aria-label="放弃列表"><Caret color={K} /></CaretTool>
            <Tools items="redo" />
            <CaretTool aria-label="重做列表"><Caret /></CaretTool>
            <Tools items="| hand zoomPm zoomWin zoomPrev | props design palette sheet markup calc | help" />
          </Toolbar>
          <Toolbar>
            <Grip />
            <Tools items="layerProps" />
            <Combo w={300} pad={97} text="0" label="图层">
              <Icon name="bulb" /><Icon name="sun" /><Icon name="vpFreeze" /><Icon name="lock" />
              <Swatch />
            </Combo>
            <Tools items="layerMake layerPrev layerState" />
          </Toolbar>
          <Toolbar>
            <Grip />
            <Tools items="textStyle" />
            <Combo w={120} pad={17} text="Standard" label="文字样式" />
            <Sep />
            <Tools items="dimStyle" />
            <Combo w={120} pad={17} text="小图标注" label="标注样式" />
            <Sep />
            <Tools items="tableStyle" />
            <Combo w={120} pad={4} text="STANDARD" label="表格样式" />
            <Sep />
            <Tools items="leaderStyle" />
            <Combo w={120} pad={17} text="Standard" label="多重引线样式" />
          </Toolbar>
        </ToolRow>
        <ToolRow>
          <Toolbar>
            <Grip />
            <Tools items="dimLinear dimAligned dimArc dimOrd | dimRadius dimJog dimDia dimAngle | dimQuick dimBase dimCont dimSpace dimBreak | tolerance center inspect jog | dimEdit dimText dimUpdate |" />
            <Combo w={120} pad={17} text="小图标注" label="标注样式控制" />
            <Tools items="dimStyle" />
          </Toolbar>
          <Toolbar>
            <Grip />
            <Combo w={150} pad={19} text="ByLayer" label="颜色"><Swatch /></Combo>
            <Sep />
            <Combo w={160} pad={69} text="ByLayer" label="线型"><LineSample $w={60} /></Combo>
            <Sep />
            <Combo w={125} pad={44} text="ByLayer" label="线宽"><LineSample $w={34} /></Combo>
            <Sep />
            <Combo w={120} pad={9} text="ByColor" label="打印样式" off />
          </Toolbar>
        </ToolRow>
      </Toolbars>

      <Work>
        <SideBar>
          <Grip $flat />
          <Tools items="line xline pline polygon rectangle arc circle cloud spline ellipse ellArc insert block point hatch gradient region table mtext addSel" />
        </SideBar>
        <Canvas>
          <ViewLabel>[−][俯视][二维线框]</ViewLabel>
          <CrossV />
          <CrossH />
          <PickBox />
          <Ucs width="80" height="90" fill="none" stroke="#e8e8e8">
            <path d="M6.500 23v51M6.500 73.500h51M2.500 69.500h8v8h-8z" />
            <text x="67" y="72" stroke="none" fill="#e8e8e8" textAnchor="middle">X</text>
            <text x="14" y="19" stroke="none" fill="#e8e8e8" textAnchor="middle">Y</text>
          </Ucs>
          <ViewCube width="130" height="160" viewBox="0 -10 130 160" fill="#b0b3b5" textAnchor="middle">
            <circle cx="65" cy="69" r="53" fill="none" stroke="#414951" strokeWidth="14" />
            <rect x="39" y="42" width="52" height="52" fill="#a1a2a1" />
            <rect x="49" y="52" width="32" height="32" fill="#9ba2ad" />
            <text x="65" y="77" fontSize="27" fill="#4b4e57">上</text>
            <text x="65" y="20">北</text>
            <text x="65" y="133">南</text>
            <text x="9" y="76">西</text>
            <text x="121" y="76">东</text>
          </ViewCube>
          <Wcs>
            WCS
            <svg width="9" height="6" fill="none"><path d="M1 1h7L4.500 5z" stroke="#aeb0b8" /></svg>
          </Wcs>
          <Nav />
        </Canvas>
        <SideBar>
          <Grip $flat />
          <Tools items="erase copy mirror offset array move rotate scale stretch trim extend breakPt breakSeg join chamfer fillet blend explode" />
        </SideBar>
      </Work>

      <Command>
        <CommandSide>
          <CommandGrip />
          <button aria-label="关闭命令行"><Icon name="closeSm" size={12} /></button>
          <button aria-label="自定义命令行"><Icon name="wrench" /></button>
        </CommandSide>
        <CommandMain>
          <History>
            <div><span>命令:</span><span>_qsave</span></div>
            <div><span>命令:</span><span>正在重生成模型。</span></div>
          </History>
          <Prompt>
            <Icon name="prompt" />
            <Caret />
            <input placeholder="键入命令" aria-label="命令" />
          </Prompt>
        </CommandMain>
      </Command>

      <Battery />
      <Watermark>
        <Ears width="60" height="17" fill="#c5c8c8">
          <ellipse cx="13" cy="17" rx="12" ry="17" />
          <ellipse cx="44" cy="19" rx="13" ry="16" />
        </Ears>
        <svg width="66" height="68" fill="none" stroke="#cdcecf" strokeWidth="6" strokeLinecap="round">
          <path d="M20 51q-5 2-5-4V10q0-8 8-6l30 14q14 9 1 26L28 61q-22 9-25-12V16q0-4 1-6" />
          <path d="M25 26l12 7-12 7z" fill="#cdcecf" strokeWidth="1" />
          <path d="M42.500 28v11" strokeWidth="2.500" strokeLinecap="butt" />
        </svg>
        <div>
          <Brand>溜溜自学</Brand>
          <BrandUrl>zixue.3D66.COM</BrandUrl>
        </div>
      </Watermark>
    </Page>
  );
}
